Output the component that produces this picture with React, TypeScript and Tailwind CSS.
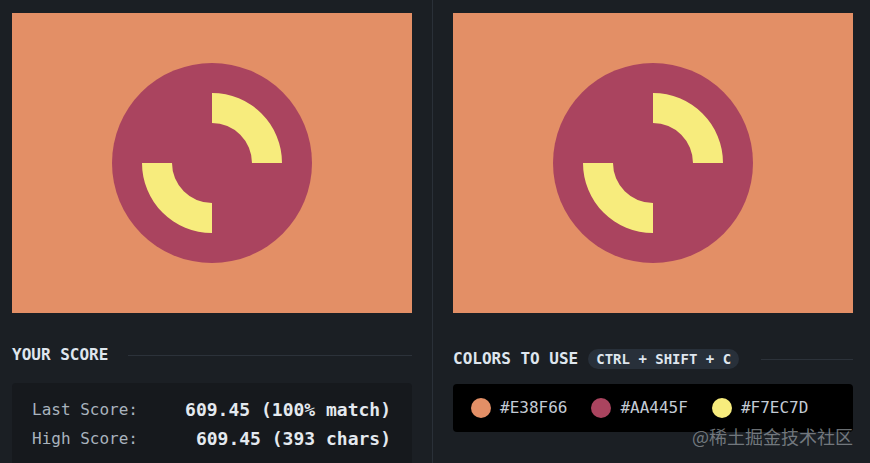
import React from 'react';

const mono = { fontFamily: '"DejaVu Sans Mono", "Liberation Mono", monospace' };

const palette = ['#E38F66', '#AA445F', '#F7EC7D'];

function Target() {
  return (
    <svg width="400" height="300" viewBox="0 0 400 300" className="block">
      <rect width="400" height="300" fill="#E38F66" />
      <circle cx="200" cy="150" r="100" fill="#AA445F" />
      <path d="M200 80 A70 70 0 0 1 270 150 L240 150 A40 40 0 0 0 200 110 Z" fill="#F7EC7D" />
      <path d="M200 220 A70 70 0 0 1 130 150 L160 150 A40 40 0 0 0 200 190 Z" fill="#F7EC7D" />
    </svg>
  );
}

export default function App() {
  return (
    <div className="relative w-[870px] h-[463px] overflow-hidden bg-[#1b1f24] flex" style={mono}>
      {/* left: your output */}
      <div className="w-[432px] pl-[12px] pt-[13px]">
        <Target />
        <div className="mt-[30px] flex items-center h-[24px] w-[400px]">
          <span className="text-[16px] font-bold text-[#dfe6ee] tracking-normal">YOUR SCORE</span>
          <div className="flex-1 ml-[20px] h-px bg-[#2c323a]" />
        </div>
        <div className="mt-[16px] w-[400px] h-[100px] bg-[#16191d] rounded-[4px] pt-[12px] px-[20px] pr-[21px]">
          <div className="flex items-center justify-between h-[29px]">
            <span className="text-[16px] text-[#a9b3be]">Last Score:</span>
            <span className="text-[18px] font-bold text-[#e4e9ef]">609.45 (100% match)</span>
          </div>
          <div className="flex items-center justify-between h-[29px]">
            <span className="text-[16px] text-[#a9b3be]">High Score:</span>
            <span className="text-[18px] font-bold text-[#e4e9ef]">609.45 (393 chars)</span>
          </div>
        </div>
      </div>

      <div className="w-px h-full bg-[#2a3038]" />

      {/* right: target */}
      <div className="pl-[20px] pt-[13px]">
        <Target />
        <div className="mt-[34px] flex items-center h-[24px] w-[400px]">
          <span className="text-[16px] font-bold text-[#dfe6ee]">COLORS TO USE</span>
          <span className="ml-[10px] h-[20px] px-[8px] rounded-full bg-[#28303a] text-[14px] font-bold text-[#dfe6ee] flex items-center">
            CTRL + SHIFT + C
          </span>
          <div className="flex-1 ml-[22px] h-px bg-[#2c323a]" />
        </div>
        <div className="mt-[13px] w-[400px] h-[48px] bg-black rounded-[4px] flex items-center pl-[18px] gap-[24px]">
          {palette.map((c) => (
            <div key={c} className="flex items-center gap-[9px]">
              <div className="w-[20px] h-[20px] rounded-full" style={{ backgroundColor: c }} />
              <span className="text-[16px] text-[#c3cbd5]">#{c.slice(1)}</span>
            </div>
          ))}
        </div>
      </div>

      <div
        className="absolute left-[692px] top-[423px] text-[18px] text-[#9aa0a6]/70"
        style={{ fontFamily: '"Noto Sans CJK SC", sans-serif' }}
      >
        @稀土掘金技术社区
      </div>
    </div>
  );
}
